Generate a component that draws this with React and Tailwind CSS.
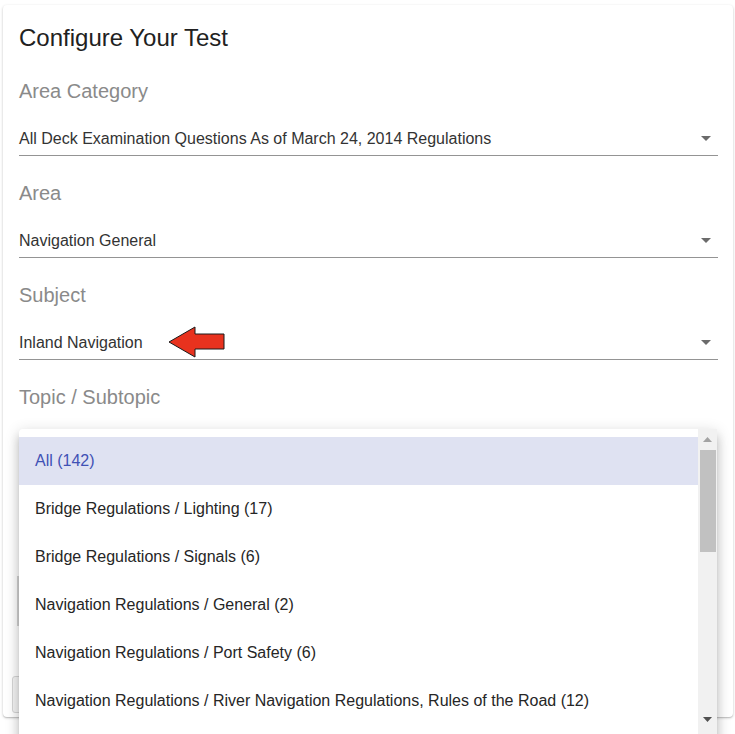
import React from 'react';

const sections = [
    { label: 'Area Category', value: 'All Deck Examination Questions As of March 24, 2014 Regulations' },
    { label: 'Area', value: 'Navigation General' },
    { label: 'Subject', value: 'Inland Navigation', arrow: true },
];

const topics = [
    'All (142)',
    'Bridge Regulations / Lighting (17)',
    'Bridge Regulations / Signals (6)',
    'Navigation Regulations / General (2)',
    'Navigation Regulations / Port Safety (6)',
    'Navigation Regulations / River Navigation Regulations, Rules of the Road (12)',
];

function Caret() {
    return (
        <svg width="10" height="5" viewBox="0 0 10 5" className="mr-[7px]">
            <path d="M0 0h10L5 5z" fill="#6b6b6b" />
        </svg>
    );
}

function RedArrow() {
    return (
        <svg className="absolute left-[131px] top-[-2px]" width="80" height="36" viewBox="150 324 80 36">
            <polygon points="169,342 195,327 195,334 224,334 224,349 195,349 195,357" fill="#e8321e" stroke="#1a1a1a" strokeWidth="1" />
        </svg>
    );
}

function SelectField({ label, value, arrow }) {
    return (
        <div className="mt-[24px]">
            <div className="h-[26px] leading-[26px] text-[20px] text-[#8a8a8a]">{label}</div>
            <div className="relative mt-[18px] h-[34px] flex items-center justify-between border-b border-[#949494] text-[16px] text-[#333]">
                <span>{value}</span>
                {arrow && <RedArrow />}
                <Caret />
            </div>
        </div>
    );
}

export default function App() {
    return (
        <div className="relative w-[735px] h-[734px] overflow-hidden bg-white" style={{ fontFamily: '"Liberation Sans", Arial, sans-serif' }}>
            <div className="ml-[3px] mt-[5px] w-[730px] h-[712px] rounded-[4px] bg-white shadow-[0_1px_3px_rgba(0,0,0,0.2),0_1px_1px_rgba(0,0,0,0.12)] pl-[16px] pr-[15px] pt-[17px]">
                <h1 className="h-[32px] leading-[32px] text-[24px] text-[#212121]">Configure Your Test</h1>
                {sections.map((s) => (
                    <SelectField key={s.label} {...s} />
                ))}
                <div className="mt-[24px]">
                    <div className="h-[26px] leading-[26px] text-[20px] text-[#8a8a8a]">Topic / Subtopic</div>
                    <div className="mt-[166px] -ml-[2px] h-[50px] border-l-2 border-[#d4d4d4]"></div>
                </div>
                <div className="mt-[50px] -ml-[7px] h-[37px] w-[200px] rounded-[3px] border border-[#d6d6d6] bg-[#f5f5f5]"></div>
            </div>

            {/* open topic menu */}
            <div className="absolute left-[19px] top-[429px] w-[698px] h-[320px] flex bg-white rounded-[4px] shadow-[0_5px_5px_-3px_rgba(0,0,0,0.2),0_8px_10px_1px_rgba(0,0,0,0.14),0_3px_14px_2px_rgba(0,0,0,0.12)]">
                <ul className="flex-1 pt-[8px] text-[16px]">
                    {topics.map((t, i) => (
                        <li
                            key={t}
                            className={
                                i === 0
                                    ? 'h-[48px] flex items-center pl-[16px] bg-[#dfe2f2] text-[#3f51b5]'
                                    : 'h-[48px] flex items-center pl-[16px] text-[#262626]'
                            }
                        >
                            {t}
                        </li>
                    ))}
                </ul>
                <div className="relative w-[19px] h-[305px] bg-[#f1f1f1]">
                    <svg className="absolute left-[5px] top-[8px]" width="9" height="5" viewBox="0 0 9 5">
                        <path d="M0 5h9L4.5 0z" fill="#a3a3a3" />
                    </svg>
                    <div className="absolute left-[2px] top-[21px] w-[16px] h-[102px] bg-[#c1c1c1]"></div>
                    <svg className="absolute left-[5px] top-[288px]" width="9" height="5" viewBox="0 0 9 5">
                        <path d="M0 0h9L4.5 5z" fill="#505050" />
                    </svg>
                </div>
            </div>
        </div>
    );
}
